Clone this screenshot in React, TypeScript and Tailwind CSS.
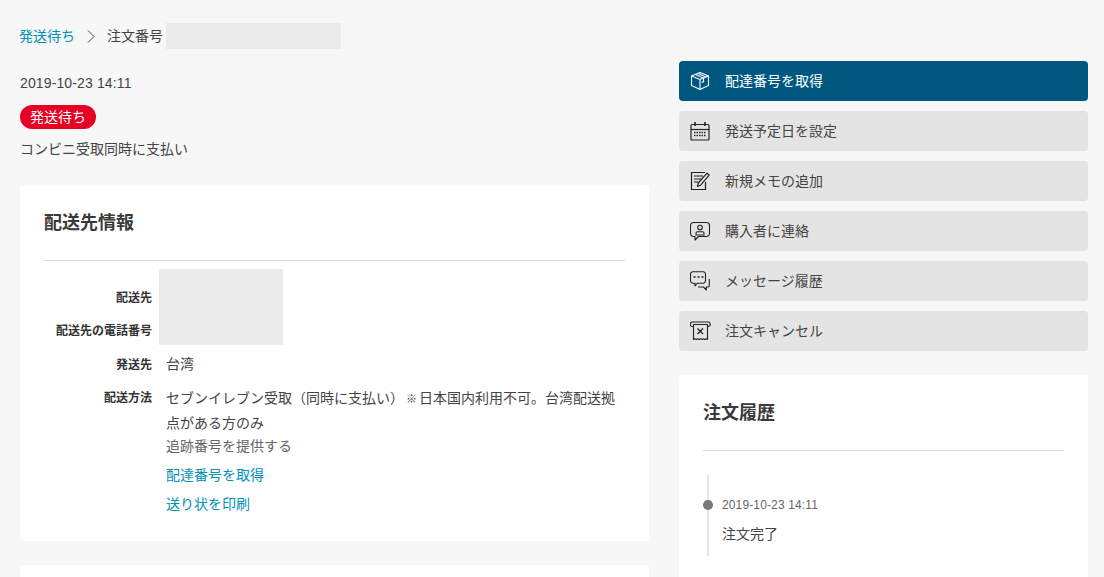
import type { ReactNode } from "react"

const font = { fontFamily: '"Liberation Sans", "Noto Sans CJK JP", sans-serif' }

function PackageIcon() {
  return (
    <svg width="20" height="20" viewBox="0 0 20 20" fill="none" stroke="currentColor" strokeWidth="1.1">
      <path d="M10 1.500 18.500 5v9.500L10 18.500 1.500 14.500V5z" strokeLinejoin="round" />
      <path d="M1.500 5 10 8.500 18.500 5M10 8.500v10" />
      <path d="M5 3.300 13.500 7v3.800l-2 .8" />
      <path d="M7.500 2.300 16 6" />
    </svg>
  )
}

function CalendarIcon() {
  return (
    <svg width="20" height="20" viewBox="0 0 20 20" fill="none" stroke="currentColor" strokeWidth="1.2">
      <rect x="1" y="3.500" width="18" height="15.500" rx="1" />
      <path d="M1 8.500h18" />
      <path d="M5 1v4M15 1v4" strokeWidth="1.600" />
      <path d="M4 11.500h12M4 14.500h12" strokeWidth="1.500" strokeDasharray="1.500 1" />
    </svg>
  )
}

function MemoIcon() {
  return (
    <svg width="20" height="20" viewBox="0 0 20 20" fill="none" stroke="currentColor" strokeWidth="1.2">
      <path d="M15 1.500H1.500v17H15.500V11" />
      <path d="M4 5h9M4 8h7M4 11h4" />
      <path d="m7.500 15.500.8-3.500L17 2.200l2.200 2-8.600 10z" strokeLinejoin="round" />
    </svg>
  )
}

function ContactIcon() {
  return (
    <svg width="21" height="20" viewBox="0 0 21 20" fill="none" stroke="currentColor" strokeWidth="1.100">
      <path d="M3.500 1.500h13a3 3 0 0 1 3 3v8a3 3 0 0 1-3 3H8.500L5 19v-3.500H3.500a3 3 0 0 1-3-3v-8a3 3 0 0 1 3-3z" strokeLinejoin="round" />
      <circle cx="10" cy="6.500" r="2.300" />
      <path d="M6 14v-1.800a1.500 1.500 0 0 1 1.500-1.500h5a1.500 1.500 0 0 1 1.500 1.500V14z" />
    </svg>
  )
}

function ChatIcon() {
  return (
    <svg width="21" height="20" viewBox="0 0 21 20" fill="none" stroke="currentColor" strokeWidth="1.100">
      <path d="M3 .700h10a2.500 2.500 0 0 1 2.500 2.500v6.500a2.500 2.500 0 0 1-2.500 2.500H7.500L5 15v-2.800H3A2.500 2.500 0 0 1 .500 9.700V3.200A2.500 2.500 0 0 1 3 .700z" strokeLinejoin="round" />
      <path d="M3.500 6h2M7.500 6h2M11.500 6h2" strokeWidth="1.500" />
      <path d="M19.300 8v6.500a1.500 1.500 0 0 1-1.500 1.500h-1.500v3L13.500 16H8" strokeLinejoin="round" />
    </svg>
  )
}

function CancelIcon() {
  return (
    <svg width="21" height="20" viewBox="0 0 21 20" fill="none" stroke="currentColor" strokeWidth="1.100">
      <path d="M3 5.500H2.500a2.200 2.200 0 0 1 0-4.500h15.500a2.200 2.200 0 0 1 0 4.500H17.500" />
      <path d="M3.500 3.500v15l1.400-.8 1.400.8 1.400-.8 1.400.8 1.400-.8 1.400.8 1.400-.8 1.400.8 1.400-.8 1.400.8v-15z" strokeLinejoin="round" />
      <path d="m7.500 7.500 5.500 5.500M13 7.500 7.500 13" strokeWidth="1.400" />
    </svg>
  )
}

function ActionButton({ icon, label, primary }: { icon: ReactNode; label: string; primary?: boolean }) {
  return (
    <button
      type="button"
      className={
        primary
          ? "flex h-10 items-center rounded bg-[#005880] pl-[11px] text-sm text-white"
          : "flex h-10 items-center rounded bg-[#e4e4e4] pl-[11px] text-sm text-[#444]"
      }
    >
      <span className={primary ? "flex w-[35px] shrink-0 items-center" : "flex w-[35px] shrink-0 items-center text-[#222]"}>{icon}</span>
      {label}
    </button>
  )
}

function Row({ label, children }: { label: string; children: ReactNode }) {
  return (
    <div className="flex">
      <div className="w-[108px] shrink-0 text-right text-xs leading-6 font-bold text-[#333]">{label}</div>
      <div className="ml-[14px] min-w-0 flex-1 text-sm text-[#444]">{children}</div>
    </div>
  )
}

export default function App() {
  return (
    <div className="h-[577px] overflow-hidden bg-[#f7f7f7] px-5 pt-[23px] text-[#333]" style={font}>
      <div className="flex h-[26px] items-center text-sm">
        <a href="#" className="-ml-px w-[56px] whitespace-nowrap text-[#0091b8]">発送待ち</a>
        <svg className="mr-[10px] ml-[11px]" width="11" height="14" viewBox="0 0 11 14" fill="none" stroke="#444" strokeWidth="1">
          <path d="m2 1.500 6 6-6 6" />
        </svg>
        <span className="text-[#444]">注文番号</span>
        <div className="ml-[3px] h-[26px] w-[175px] bg-[#ebebeb]" />
      </div>

      <div className="mt-3 flex gap-[30px]">
        <div className="w-[629px] shrink-0">
          <p className="mt-[12px] text-sm leading-[20px] tracking-[0.13px] text-[#444]">2019-10-23 14:11</p>
          <span className="mt-[12px] block h-6 w-[76px] rounded-full bg-[#e60023] text-center text-sm leading-6 text-white">発送待ち</span>
          <p className="mt-[10px] text-sm leading-[20px] text-[#444]">コンビニ受取同時に支払い</p>

          <section className="mt-[26px] h-[356px] rounded bg-white px-6 pt-[26px]">
            <h2 className="text-lg leading-[24px] font-bold text-[#3a3a3a]">配送先情報</h2>
            <div className="mt-[25px] border-t border-[#d9d9d9]" />
            <div className="relative mt-[8px] h-[76px]">
              <div className="absolute top-0 left-[115px] h-[76px] w-[124px] bg-[#ebebeb]" />
              <div className="w-[108px] pt-[19px] text-right text-xs leading-[20px] font-bold">配送先</div>
              <div className="mt-[13px] w-[108px] text-right text-xs leading-[20px] font-bold">配送先の電話番号</div>
            </div>
            <div className="mt-2 flex flex-col gap-[9px]">
              <Row label="発送先">
                <p className="-mt-px leading-6">台湾</p>
              </Row>
              <Row label="配送方法">
                <p className="-mb-px leading-6">
                  セブンイレブン受取（同時に支払い）<span className="mr-[-2px] ml-[2px] text-[11px]">※</span> 日本国内利用不可。台湾配送拠
                  <br />
                  点がある方のみ
                </p>
                <p className="leading-6 text-[#666]">追跡番号を提供する</p>
                <a href="#" className="mt-[5px] block leading-6 text-[#0091b8]">配達番号を取得</a>
                <a href="#" className="mt-[5px] block leading-6 text-[#0091b8]">送り状を印刷</a>
              </Row>
            </div>
          </section>

          <section className="mt-6 h-20 rounded bg-white" />
        </div>

        <div className="w-[409px] shrink-0">
          <div className="flex flex-col gap-[10px]">
            <ActionButton primary icon={<PackageIcon />} label="配達番号を取得" />
            <ActionButton icon={<CalendarIcon />} label="発送予定日を設定" />
            <ActionButton icon={<MemoIcon />} label="新規メモの追加" />
            <ActionButton icon={<ContactIcon />} label="購入者に連絡" />
            <ActionButton icon={<ChatIcon />} label="メッセージ履歴" />
            <ActionButton icon={<CancelIcon />} label="注文キャンセル" />
          </div>

          <section className="mt-6 h-[300px] rounded bg-white px-6 pt-[26px]">
            <h2 className="text-lg leading-[24px] font-bold text-[#3a3a3a]">注文履歴</h2>
            <div className="mt-[25px] border-t border-[#d9d9d9]" />
            <div className="mt-6 ml-[4px] border-l-2 border-[#e4e4e4] pt-[21px] pb-[12px] pl-[13px]">
              <div className="relative">
                <span className="absolute top-[4px] left-[-19px] h-[10px] w-[10px] rounded-full bg-[#77777c]" />
                <p className="text-xs leading-[18px] tracking-[0.13px] text-[#666]">2019-10-23 14:11</p>
                <p className="mt-[10px] text-sm leading-[20px] text-[#444]">注文完了</p>
              </div>
            </div>
          </section>
        </div>
      </div>
    </div>
  )
}
